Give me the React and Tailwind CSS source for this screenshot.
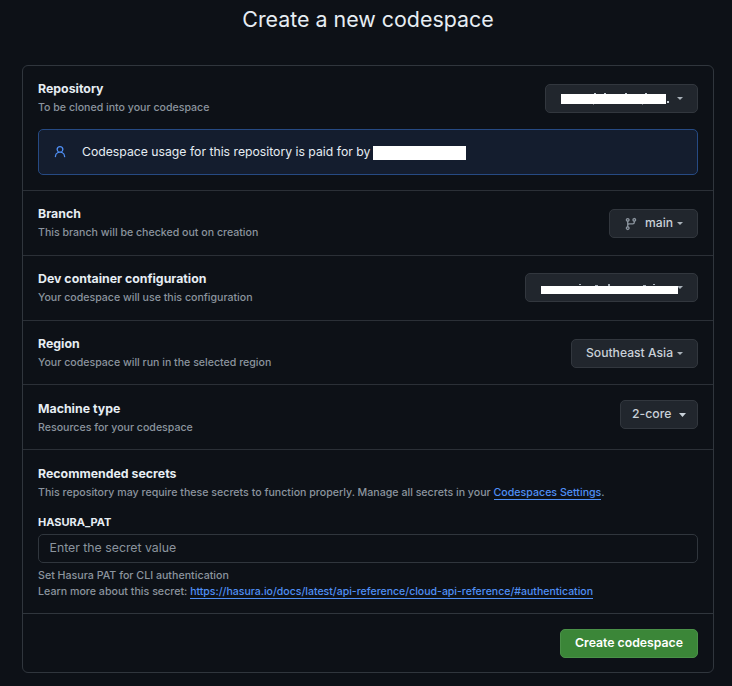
const BUTTON =
  "flex h-[29px] shrink-0 items-center rounded-[5px] border border-[#32373e] bg-[#21262d] text-[#c9d1d9] font-medium";

function Caret({ className = "" }) {
  return (
    <svg className={className} width="6" height="3" viewBox="0 0 6 3" fill="#a9b1b9">
      <path d="M0 0h6L3 3z" />
    </svg>
  );
}

function BranchIcon() {
  return (
    <svg width="14" height="14" viewBox="0 0 16 16" fill="#8b949e">
      <path d="M9.5 3.25a2.25 2.25 0 1 1 3 2.122V6A2.5 2.5 0 0 1 10 8.5H6a1 1 0 0 0-1 1v1.128a2.251 2.251 0 1 1-1.5 0V5.372a2.25 2.25 0 1 1 1.5 0v1.836A2.493 2.493 0 0 1 6 7h4a1 1 0 0 0 1-1v-.628A2.25 2.25 0 0 1 9.5 3.25Zm-6 0a.75.75 0 1 0 1.5 0 .75.75 0 0 0-1.5 0Zm8.25-.75a.75.75 0 1 0 0 1.5.75.75 0 0 0 0-1.5ZM4.25 12a.75.75 0 1 0 0 1.5.75.75 0 0 0 0-1.5Z" />
    </svg>
  );
}

function PersonIcon() {
  return (
    <svg width="14" height="14" viewBox="0 0 16 16" fill="#4f8ff5">
      <path d="M10.561 8.073a6.005 6.005 0 0 1 3.432 5.142.75.75 0 1 1-1.498.07 4.5 4.5 0 0 0-8.99 0 .75.75 0 0 1-1.498-.07 6.004 6.004 0 0 1 3.431-5.142 3.999 3.999 0 1 1 5.123 0ZM10.5 5a2.5 2.5 0 1 0-5 0 2.5 2.5 0 0 0 5 0Z" />
    </svg>
  );
}

function Heading({ title, className = "pt-[14px]", children }) {
  return (
    <div className={className}>
      <h2 className="text-[12.35px] leading-[18px] font-[650] text-[#e6edf3]">{title}</h2>
      <p className="pt-[2px] text-[10.6px] leading-4 font-[450] text-[#8b949e]">{children}</p>
    </div>
  );
}

function Row({ title, text, height, headingClass, children }) {
  return (
    <section className={"flex items-start justify-between border-b border-[#2b3037] px-[15px] " + height}>
      <Heading title={title} className={headingClass}>{text}</Heading>
      {children}
    </section>
  );
}

export default function App() {
  return (
    <main className="h-[686px] w-[732px] overflow-hidden bg-[#0d1117] font-[Inter,sans-serif]">
      <h1 className="h-[65px] pt-[4px] pl-[4px] text-center text-[21.4px] leading-[30px] font-[430] text-[#e6edf3]">
        Create a new codespace
      </h1>
      <div className="ml-[22px] h-[608px] w-[692px] rounded-[6px] border border-[#30363d]">
        <section className="h-[125px] border-b border-[#2b3037] px-[15px]">
          <div className="flex h-[63px] items-start justify-between">
            <Heading title="Repository">To be cloned into your codespace</Heading>
            <button className={BUTTON + " mt-[18px] w-[153px] pl-[15px]"}>
              <svg width="109" height="13" viewBox="0 0 109 13" fill="#c9d1d9">
                <path d="M33 1h2v2h-2zM43 1h2v2h-2zM64 1h2v2h-2zM84 1h2v2h-2zM106 9h2v2h-2z" />
                <path fill="#6b7178" d="M32 12h1v1h-1zM81 12h1v1h-1z" />
                <path fill="#fff" d="M0 2h105v10H0z" />
              </svg>
              <Caret className="-mt-px ml-[7px]" />
            </button>
          </div>
          <div className="flex h-[46px] items-center rounded-[5px] border border-[#264a83] bg-[#141d2e] pl-[14px]">
            <PersonIcon />
            <p className="ml-[15px] w-[289px] text-[12.22px] leading-[18px] font-[440] whitespace-nowrap text-[#e6edf3]">
              Codespace usage for this repository is paid for by
            </p>
            <span className="mt-[2px] ml-[2px] h-[14px] w-[93px] bg-white" />
          </div>
        </section>

        <Row title="Branch" text="This branch will be checked out on creation" height="h-[65px]">
          <button className={BUTTON + " mt-[18px] w-[89px] pl-[14px] text-[12.15px]"}>
            <BranchIcon />
            <span className="ml-[7px] -mt-px">main</span>
            <Caret className="ml-[4px]" />
          </button>
        </Row>

        <Row title="Dev container configuration" text="Your codespace will use this configuration" height="h-[65px]">
          <button className={BUTTON + " mt-[17px] w-[173px] pl-[15px]"}>
            <svg width="142" height="13" viewBox="0 0 142 13" fill="#a9b1b9">
              <path d="M38 3h2v1h-2zM54 4h3v1h-3zM67 3h2v2h-2zM102 4h3v1h-3zM112 3h2v1h-2z" />
              <path d="M136 5h6l-3 3z" />
              <path fill="#fff" d="M0 5h137v8H0z" />
            </svg>
          </button>
        </Row>

        <Row title="Region" text="Your codespace will run in the selected region" height="h-[64px]">
          <button className={BUTTON + " mt-[18px] w-[127px] pl-[14px] text-[12.15px]"}>
            <span className="-mt-px">Southeast Asia</span>
            <Caret className="ml-[4px]" />
          </button>
        </Row>

        <Row
          title="Machine type"
          text="Resources for your codespace"
          height="h-[65px]"
          headingClass="pt-[15px]"
        >
          <button className={BUTTON + " mt-[15px] w-[78px] pl-[11px] text-[12.25px]"}>
            <span className="-mt-px">2-core</span>
            <svg className="ml-[8px] mt-px" width="7" height="4" viewBox="0 0 7 4" fill="currentColor">
              <path d="M0 0h7L3.500 4z" />
            </svg>
          </button>
        </Row>

        <section className="h-[164px] border-b border-[#30363d] px-[15px]">
          <Heading title="Recommended secrets" className="pt-[15px]">
            <span className="text-[10.63px]">
              This repository may require these secrets to function properly. Manage all secrets in your{" "}
              <a className="border-b border-[#4f8ff5] text-[#4f8ff5]">Codespaces Settings</a>.
            </span>
          </Heading>
          <label className="mt-[13px] block text-[11px] leading-4 font-[650] text-[#e6edf3]">HASURA_PAT</label>
          <input
            className="mt-[4px] block h-[29px] w-full rounded-[5px] border border-[#30363d] bg-[#0d1117] px-[10.5px] pb-[2px] text-[12.3px] text-[#8b949e] placeholder:text-[#8b949e]"
            placeholder="Enter the secret value"
          />
          <p className="mt-[5px] text-[10.67px] leading-4 font-[450] text-[#8b949e]">
            Set Hasura PAT for CLI authentication
          </p>
          <p className="text-[10.67px] leading-4 font-[450] text-[#8b949e]">
            Learn more about this secret:{" "}
            <a className="border-b border-[#4f8ff5] text-[10.52px] text-[#4f8ff5]">
              https://hasura.io/docs/latest/api-reference/cloud-api-reference/#authentication
            </a>
          </p>
        </section>

        <div className="flex justify-end px-[15px] pt-[15px]">
          <button className="h-[29px] w-[138px] rounded-[5px] border border-[#4a9148] bg-[#3b8638] pb-px text-[12.25px] font-semibold text-white">
            Create codespace
          </button>
        </div>
      </div>
    </main>
  );
}
